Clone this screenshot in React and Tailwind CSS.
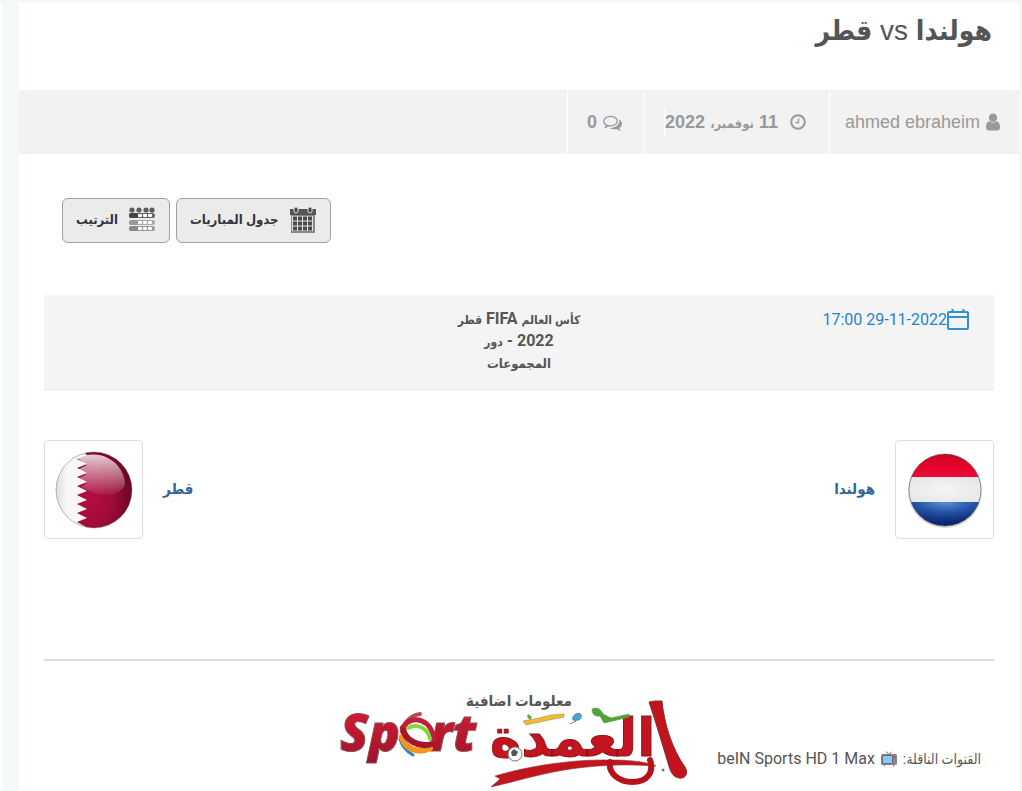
const USER_PATH =
  "M1280 1399q0 109-62.5 187t-150.5 78h-854q-88 0-150.5-78t-62.5-187q0-85 8.5-160.5t31.5-152 58.5-131 94-89 134.5-34.5q131 128 313 128t313-128q76 0 134.5 34.5t94 89 58.5 131 31.5 152 8.5 160.5zm-256-887q0 159-112.5 271.5t-271.5 112.5-271.5-112.5-112.5-271.5 112.5-271.5 271.5-112.5 271.5 112.5 112.5 271.5z";
const COMMENTS_PATH =
  "M704 384q-153 0-286 52t-211.5 141-78.5 191q0 82 53 158t149 132l97 56-35 84q34-20 62-39l44-31 53 10q78 14 153 14 153 0 286-52t211.5-141 78.5-191-78.5-191-211.5-141-286-52zm0-128q191 0 353.5 68.5t256.5 186.5 94 257-94 257-256.5 186.5-353.5 68.5q-86 0-176-16-124 88-278 128-36 9-86 16h-3q-11 0-20.5-8t-11.5-21q-1-3-1-6.5t.5-6.5 2-6l2.5-5 3.5-5.5 4-5 4.5-5 4-4.5q5-6 23-25t26-29.5 22.5-29 25-38.5 20.5-44q-124-72-195-177t-71-224q0-139 94-257t256.5-186.5 353.5-68.5zm822 1169q10 24 20.5 44t25 38.5 22.5 29 26 29.5 23 25q1 1 4 4.5t4.5 5 4 5 3.5 5.5l2.5 5 2 6 .5 6.5-1 6.5q-3 14-13 22t-22 7q-50-7-86-16-154-40-278-128-90 16-176 16-271 0-472-132 58 4 88 4 161 0 309-45t264-129q125-92 192-212t67-254q0-77-23-152 129 71 204 178t75 230q0 120-71 224.5t-195 176.5z";

function ClockIcon() {
  return (
    <svg viewBox="0 0 16 16" className="size-4" fill="none" stroke="currentColor" strokeWidth="2">
      <circle cx="8" cy="8" r="6.8" />
      <path d="M8.5 4.5v4.2H5.2" strokeWidth="1.3" />
    </svg>
  );
}

function ScheduleIcon() {
  return (
    <svg viewBox="0 0 26 26" className="size-[26px]">
      <path d="M1 4h24v22H1z" fill="#888" />
      <path d="M2 9h21v15H2z" fill="#e4e4e4" />
      <path d="M0 2h26v6H0z" fill="#555" />
      <rect x="4" y="0" width="4" height="6" rx="2" fill="#444" stroke="#ddd" />
      <rect x="18" y="0" width="4" height="6" rx="2" fill="#444" stroke="#ddd" />
      {[9, 14, 19].map((y) =>
        [2, 7, 12, 17].map((x) => (
          <rect key={`${x}-${y}`} x={x + 1} y={y + 0.5} width="4" height="4" fill="#4a4a4a" />
        ))
      )}
    </svg>
  );
}

function TableIcon() {
  return (
    <svg viewBox="0 0 26 26" className="size-[26px]">
      {[3, 10, 17, 23].map((x) => (
        <circle key={x} cx={x} cy="3" r="2.6" fill="#5c5c5c" />
      ))}
      {[
        [6, "#444", "#666"],
        [13, "#999", "#aaa"],
        [19, "#888", "#999"],
      ].map(([y, head, row]) => (
        <g key={y}>
          <rect x="0" y={y} width="26" height="5" rx="2.5" fill={row} />
          <rect x="0" y={y} width="9" height="5" rx="2.5" fill={head} />
          {[9, 14, 19].map((x) => (
            <rect key={x} x={x} y={y + 1} width="4" height="3" rx="1" fill="#fff" />
          ))}
        </g>
      ))}
    </svg>
  );
}

function DateIcon() {
  return (
    <svg viewBox="0 0 22 22" className="size-[22px]" fill="none" stroke="#2b93d6" strokeWidth="2">
      <rect x="1" y="3" width="20" height="17" rx="1" />
      <path d="M1 8h20M5.5 0v3M16.5 0v3" />
    </svg>
  );
}

function TvIcon() {
  return (
    <svg viewBox="0 0 16 16" className="size-4">
      <path d="M5 .5l3 3 2.5-2.8M4 13l-1 2.5M12 13l1 2.5" stroke="#666" fill="none" />
      <rect x="0" y="3" width="16" height="11" rx="1.5" fill="#8b8587" />
      <rect x="1.5" y="4.5" width="10" height="8" rx="1" fill="#4a4a55" />
      <rect x="2" y="5" width="9" height="7" fill="#83cbff" />
      <circle cx="13.5" cy="6" r="1" fill="#e23b5a" />
    </svg>
  );
}

function NetherlandsFlag() {
  return (
    <svg viewBox="0 0 78 78" className="size-[78px]">
      <defs>
        <linearGradient id="nlRed" x1="0" y1="0" x2="0" y2="1">
          <stop offset="0" stopColor="#c00a20" />
          <stop offset=".5" stopColor="#e00428" />
          <stop offset="1" stopColor="#ee0838" />
        </linearGradient>
        <radialGradient id="nlBlue" cx=".5" cy="0" r=".75">
          <stop offset="0" stopColor="#5b93d6" />
          <stop offset=".5" stopColor="#2553a4" />
          <stop offset="1" stopColor="#0c2873" />
        </radialGradient>
        <radialGradient id="nlWhite" cx=".5" cy=".5" r=".6">
          <stop offset="0" stopColor="#f5f5f5" />
          <stop offset="1" stopColor="#e6e6e6" />
        </radialGradient>
        <clipPath id="nlClip">
          <circle cx="39" cy="39" r="36" />
        </clipPath>
      </defs>
      <circle cx="39" cy="40" r="37" fill="#bbb" opacity=".6" />
      <g clipPath="url(#nlClip)">
        <path d="M0 0h78v26H0z" fill="url(#nlRed)" />
        <path d="M0 26h78v26H0z" fill="url(#nlWhite)" />
        <path d="M0 51h78v27H0z" fill="url(#nlBlue)" />
      </g>
      <circle cx="39" cy="39" r="36" fill="none" stroke="#444" strokeOpacity=".5" />
    </svg>
  );
}

function QatarFlag() {
  return (
    <svg viewBox="0 0 78 78" className="size-[78px]">
      <defs>
        <radialGradient id="qaRed" cx=".25" cy=".6" r=".75">
          <stop offset="0" stopColor="#b40d43" />
          <stop offset=".5" stopColor="#a00b38" />
          <stop offset="1" stopColor="#680622" />
        </radialGradient>
        <linearGradient id="qaShine" x1="0" y1="0" x2="0" y2="1">
          <stop offset="0" stopColor="#fff" stopOpacity=".8" />
          <stop offset="1" stopColor="#fff" stopOpacity=".05" />
        </linearGradient>
        <linearGradient id="qaWhite" x1="0" y1="0" x2="1" y2="0">
          <stop offset="0" stopColor="#dcdcdc" />
          <stop offset=".3" stopColor="#f7f7f7" />
        </linearGradient>
        <clipPath id="qaClip">
          <circle cx="39" cy="39" r="38" />
        </clipPath>
      </defs>
      <g clipPath="url(#qaClip)">
        <path d="M0 0h40v78H0z" fill="url(#qaWhite)" />
        <path
          d="M28 0h50v78H30l1-2-9-5 10-4-10-5 10-4-10-5 10-4-10-5 10-4-10-5 10-4-10-5 10-4-10-5 10-4-10-5 10-4z"
          fill="url(#qaRed)"
        />
        <path d="M22 7C46-4 70 12 70 34c-8 14-26 12-44 2l6-4-10-4 10-5-10-4 10-5z" fill="url(#qaShine)" />
      </g>
      <circle cx="39" cy="39" r="38" fill="none" stroke="#555" strokeOpacity=".4" />
    </svg>
  );
}

function SiteLogo() {
  return (
    <svg viewBox="0 0 350 91" direction="ltr" className="h-[91px] w-[350px] overflow-visible">
      <defs>
        <linearGradient id="logoRed" x1="0" y1="0" x2="0" y2="1">
          <stop offset="0" stopColor="#e01f35" />
          <stop offset="1" stopColor="#9c1228" />
        </linearGradient>
      </defs>
      <g
        fill="url(#logoRed)"
        stroke="#8a5058"
        strokeWidth="1"
        fontFamily="'Open Sans', sans-serif"
        fontWeight="800"
        fontStyle="italic"
        fontSize="52"
      >
        <text x="0" y="51">Sp</text>
        <text x="90" y="51">rt</text>
      </g>
      {/* ball that stands for the letter o */}
      <g fill="none" strokeLinecap="round">
        <path d="M80 14c-8 1-17 8-18 18" stroke="#b44b59" strokeWidth="4" />
        <path d="M60 39c2 7 6 12 13 16" stroke="#2c88c4" strokeWidth="3" />
        <path d="M62 37c3 12 16 17 28 11" stroke="#f7941d" strokeWidth="6" />
        <path d="M63 28c1 12 16 20 29 16" stroke="#a5162d" strokeWidth="6" />
        <path d="M64 26c8-12 29-6 29 13" stroke="#c2203a" strokeWidth="5" />
        <path d="M68 28c9-5 20 0 22 11" stroke="#86d63b" strokeWidth="4" />
      </g>
      <text
        x="150"
        y="56"
        fill="#c41420"
        stroke="#8c1118"
        strokeWidth="1"
        fontFamily="'DejaVu Sans', sans-serif"
        fontWeight="700"
        fontSize="53"
      >
        العمدة
      </text>
      <path
        d="M315 1h7c2 22 10 48 23 66 4 7 0 12-6 11-7-1-9-8-11-15-6-20-12-40-19-61z"
        fill="#c3131c"
        stroke="#7d3034"
      />
      <path
        d="M151 87l9-8-5-3c30-9 75-17 115-16 26 0 40 3 46 6-20-1-39-2-69 1-35 3-65 13-96 20z"
        fill="#c3131c"
        stroke="#8c3a3e"
        strokeWidth=".6"
      />
      <path
        d="M270 62c-2 12 10 20 22 20 16 0 22-10 18-22"
        fill="none"
        stroke="#b5121b"
        strokeWidth="6"
        strokeLinecap="round"
      />
      <circle cx="175" cy="54" r="7" fill="#fff" stroke="#777" />
      <path d="M171 52l3-3 4 3-2 4h-4z" fill="#555" />
      <path d="M183 21l16-3 12-3 13-1v3l-15 3-23 5z" fill="#f2bd2e" stroke="#9b8d4d" strokeWidth=".6" />
      <path d="M188 14l4 3-2 3-3-3z" fill="#64a840" />
      <path d="M233 20c-2-5 7-9 8-5s-2 6-8 5zm-3 4l6-3" fill="#4ca5d6" stroke="#54809b" />
      <path d="M252 9c6-3 10 2 11 5l8 4 18-4v3l-16 4-9 2-4-7c-6 1-8-3-8-7z" fill="#4ea635" stroke="#6b8a55" strokeWidth=".6" />
      <circle cx="323" cy="70" r="1.5" fill="#777" />
    </svg>
  );
}

function MetaBar() {
  return (
    <div className="flex h-16 bg-[#f2f2f2] font-['Liberation_Sans','DejaVu_Sans_Condensed','DejaVu_Sans',sans-serif] text-lg text-[#999]">
      <a href="#author" className="flex items-center gap-1.5 border-l border-white pr-[19px] pl-[15px]">
        <svg viewBox="0 0 1280 1792" className="h-5 w-3.5" fill="currentColor">
          <path d={USER_PATH} />
        </svg>
        ahmed ebraheim
      </a>
      <div className="flex items-center gap-3 border-l border-white pr-[23px] pl-[19px] font-bold">
        <ClockIcon />
        <time dateTime="2022-11-11" className="border-l border-white">
          11 <span className="text-[13px]">نوفمبر،</span> 2022
        </time>
      </div>
      <a href="#comments" className="flex items-center gap-1.5 border-l border-white pr-[22px] pl-[19px] font-bold">
        <svg viewBox="0 0 1792 1792" className="size-[19px]" fill="currentColor">
          <path d={COMMENTS_PATH} />
        </svg>
        0
      </a>
    </div>
  );
}

function NavButton({ icon, children }) {
  return (
    <button
      type="button"
      className="flex h-[45px] items-center gap-[11px] rounded-md border border-[#a0a0a0] bg-[#ebebeb] pr-[14px] pb-0.5 pl-[13px] text-[13px] font-bold text-[#333340]"
    >
      {icon}
      {children}
    </button>
  );
}

function Team({ flag, name, reverse }) {
  return (
    <a
      href="#team"
      className={`flex items-center gap-5 text-[15px] font-bold text-[#336699] ${reverse ? "flex-row-reverse" : ""}`}
    >
      <span className="grid size-[99px] place-items-center rounded-sm border border-[#ddd] bg-white">
        {flag}
      </span>
      {name}
    </a>
  );
}

export default function App() {
  return (
    <div
      dir="rtl"
      className="flex min-h-screen gap-4 overflow-hidden bg-[#f4f8f9] pt-[3px] pr-[3px] font-[Roboto,'DejaVu_Sans_Condensed','DejaVu_Sans',sans-serif] text-[#555]"
    >
      <main className="min-w-0 flex-1 bg-white">
        <h1 className="h-[87px] px-[27px] pt-2 font-['Liberation_Sans','DejaVu_Sans_Condensed','DejaVu_Sans',sans-serif] text-[28px] leading-10">
          <b>هولندا</b> vs <b>قطر</b>
        </h1>
        <MetaBar />

        <div className="px-[25px]">
          <nav className="flex justify-end gap-1.5 pt-11 pl-[18px]">
            <NavButton icon={<ScheduleIcon />}>جدول المباريات</NavButton>
            <NavButton icon={<TableIcon />}>الترتيب</NavButton>
          </nav>

          <section className="mt-[52px] grid h-[95px] grid-cols-[1fr_140px_1fr] border-b border-[#e8e8e8] bg-[#f4f4f4] px-[25px] pt-[13px]">
            <div className="flex h-6 items-center text-[#1e85cc]">
              <DateIcon />
              <time dateTime="2022-11-29T17:00" dir="ltr">17:00 29-11-2022</time>
            </div>
            <p className="text-center text-base leading-[22px] font-bold">
              <span className="text-xs leading-none">كأس العالم</span> FIFA{" "}
              <span className="text-xs leading-none">قطر</span>
              <br />
              2022 - <span className="text-xs leading-none">دور</span>
              <br />
              <span className="text-[13px] leading-none">المجموعات</span>
            </p>
          </section>

          <section className="mt-[50px] flex justify-between">
            <Team flag={<NetherlandsFlag />} name="هولندا" />
            <Team flag={<QatarFlag />} name="قطر" reverse />
          </section>

          <hr className="mt-[120px] border-t-2 border-[#ddd]" />

          <section className="relative pt-7">
            <h2 className="text-center text-[15px] leading-6 font-bold">معلومات اضافية</h2>
            <p className="flex items-center gap-1.5 px-[13px] pt-[34px] leading-6">
              <span className="text-sm">القنوات الناقلة:</span>
              <TvIcon />
              <span>beIN Sports HD 1 Max</span>
            </p>
            <div className="pointer-events-none absolute inset-x-0 top-[39px] flex justify-center pr-2">
              <SiteLogo />
            </div>
          </section>
        </div>
      </main>
      <aside className="w-[3px] bg-white" />
    </div>
  );
}
